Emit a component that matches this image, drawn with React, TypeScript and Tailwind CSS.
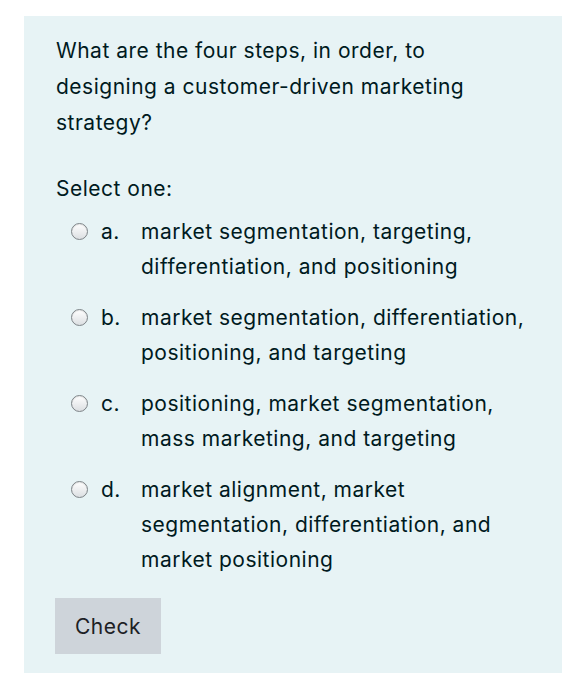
const options = [
  { letter: "a.", lines: ["market segmentation, targeting,", "differentiation, and positioning"] },
  { letter: "b.", lines: ["market segmentation, differentiation,", "positioning, and targeting"] },
  { letter: "c.", lines: ["positioning, market segmentation,", "mass marketing, and targeting"] },
  { letter: "d.", lines: ["market alignment, market", "segmentation, differentiation, and", "market positioning"] },
];

function Radio() {
  return (
    <span className="mt-[9px] h-[17px] w-[17px] shrink-0 rounded-full border border-[#7d8387] bg-gradient-to-b from-white to-[#dcdfe2] shadow-[inset_0_1px_1px_rgba(0,0,0,0.1)]" />
  );
}

export default function App() {
  return (
    <div className="min-h-[700px] bg-white pl-[24px] pt-[16px] font-['Inter','Liberation_Sans',sans-serif] text-[21px] leading-[35px] tracking-[0.5px] text-[#001a1e]">
      <div className="w-[538px] bg-[#e7f3f5] pl-[32px] pt-[17px] pb-[19px]">
        <div className="leading-[36px]">
          <div>What are the four steps, in order, to</div>
          <div>designing a customer-driven marketing</div>
          <div>strategy?</div>
        </div>
        <div className="mt-[30px]">Select one:</div>
        <div className="mt-[8px] flex flex-col gap-[16px]">
          {options.map((o) => (
            <div key={o.letter} className="flex items-start pl-[15px]">
              <Radio />
              <span className="ml-[13px] w-[40px] shrink-0">{o.letter}</span>
              <div>
                {o.lines.map((l) => (
                  <div key={l}>{l}</div>
                ))}
              </div>
            </div>
          ))}
        </div>
        <button className="mt-[21px] h-[56px] w-[106px] -ml-[1px] bg-[#ced4da] text-[#1d2125]">
          Check
        </button>
      </div>
    </div>
  );
}
